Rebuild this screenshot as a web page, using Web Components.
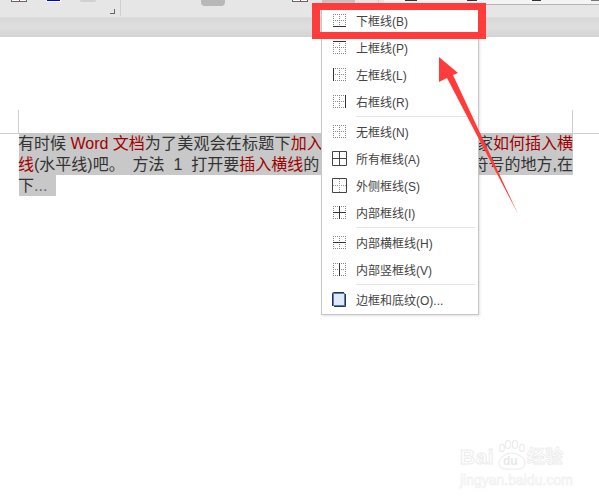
<!DOCTYPE html>
<html lang="zh">
<head>
<meta charset="utf-8">
<title>下框线</title>
<style>
  html, body { margin: 0; padding: 0; background: #fff; }
  body { width: 599px; height: 501px; overflow: hidden; font-family: "Liberation Sans", "Noto Sans CJK SC", sans-serif; }
</style>
</head>
<body>
<word-window>
  <word-ribbon slot="top"></word-ribbon>
  <doc-page slot="doc">
    <doc-line><span>有时候 <b>Word 文档</b><u>为了美观会在标题下</u><b>加入</b></span><span>家<b>如何插入横</b></span></doc-line>
    <doc-line><span><b>线</b>(水平线)吧。<em>&nbsp;&nbsp;</em>方法&nbsp;&nbsp;1&nbsp;&nbsp;打开要<b>插入横线</b>的</span><span>符号的地方,在</span></doc-line>
    <doc-line short><span>下<i>...</i></span></doc-line>
  </doc-page>
  <border-menu slot="over">
    <menu-row icon="B">下框线(B)</menu-row>
    <menu-row icon="P">上框线(P)</menu-row>
    <menu-row icon="L">左框线(L)</menu-row>
    <menu-row icon="R">右框线(R)</menu-row>
    <menu-sep></menu-sep>
    <menu-row icon="N">无框线(N)</menu-row>
    <menu-row icon="A">所有框线(A)</menu-row>
    <menu-row icon="S">外侧框线(S)</menu-row>
    <menu-row icon="I">内部框线(I)</menu-row>
    <menu-sep></menu-sep>
    <menu-row icon="H">内部横框线(H)</menu-row>
    <menu-row icon="V">内部竖框线(V)</menu-row>
    <menu-sep></menu-sep>
    <menu-row icon="O">边框和底纹(O)...</menu-row>
  </border-menu>
  <red-callout slot="over"></red-callout>
  <baidu-mark slot="over"></baidu-mark>
</word-window>

<script>
// Page frame: ribbon + grey band on top, document below, overlays on top of both
class WordWindow extends HTMLElement {
  constructor() {
    super();
    this.attachShadow({ mode: 'open' });
    this.shadowRoot.innerHTML = `
      <style>
        :host { display: flex; flex-direction: column; position: relative; width: 599px; height: 501px; overflow: hidden; }
        .band { height: 19px; background: linear-gradient(#d8d8d8 0, #dfdfdf 45%, #d3d3d3 100%); }
      </style>
      <slot name="top"></slot>
      <div class="band"></div>
      <slot name="doc"></slot>
      <slot name="over"></slot>
    `;
  }
}

// Only the cut-off bottom edge of the ribbon is visible
class WordRibbon extends HTMLElement {
  constructor() {
    super();
    this.attachShadow({ mode: 'open' });
    this.shadowRoot.innerHTML = `
      <style>
        :host { display: flex; align-items: flex-start; height: 18px; background: #e6e6e6; box-sizing: border-box; border-bottom: 1px solid #dcdcdc; }
        div { flex: none; box-sizing: border-box; }
        .box { height: 2px; width: 16px; border: 1px solid #666; border-top: 0; background: linear-gradient(90deg, #fff 47%, #d33 47%, #d33 56%, #fff 56%); }
        .blue { width: 15px; height: 2px; margin-left: 19px; background: #0000f0; border: 1px solid #fff; border-top: 0; }
        .grey { width: 16px; height: 2px; margin-left: 19px; background: #d0d0d0; border-radius: 0 0 2px 2px; }
        .launcher { width: 5px; height: 5px; margin: 9px 0 0 14px; border-right: 1px solid #666; border-bottom: 1px solid #666; }
        .sep { width: 1px; height: 16px; margin-left: 5px; background: #cfcfcf; }
        .pressed { width: 24px; height: 6px; margin-left: 80px; background: #b8b8b8; border-radius: 0 0 4px 4px; }
        .box2 { margin-left: 67px; }
        .sel { width: 33px; height: 3px; margin-left: 14px; background: #c4c4c4; }
        .sep2 { width: 1px; height: 16px; margin-left: 23px; background: #cfcfcf; }
        .gallery { flex: 1; height: 5px; margin-left: 5px; background: #f4f4f4; border-bottom: 1px solid #b4b4b4; display: flex; }
        .gallery span { height: 1px; background: #333; }
        .s1 { width: 12px; margin-left: 21px; }
        .s2 { width: 10px; margin-left: 50px; }
        .s3 { width: 9px; margin-left: 55px; }
        .s4 { width: 9px; margin-left: 50px; background: #777 !important; }
      </style>
      <div class="box" style="margin-left:11px"></div>
      <div class="blue"></div>
      <div class="grey"></div>
      <div class="launcher"></div>
      <div class="sep"></div>
      <div class="pressed"></div>
      <div class="box box2"></div>
      <div class="sel"></div>
      <div class="sep2"></div>
      <div class="gallery"><span class="s1"></span><span class="s2"></span><span class="s3"></span><span class="s4"></span></div>
    `;
  }
}

class DocPage extends HTMLElement {
  constructor() {
    super();
    this.attachShadow({ mode: 'open' });
    this.shadowRoot.innerHTML = `
      <style>
        :host { display: block; flex: 1; background: #fff; padding-top: 73px; }
        .marks { display: flex; justify-content: space-between; height: 24px; margin-bottom: -1px; }
        .marks div { box-sizing: border-box; border-bottom: 1px solid #cfcfcf; }
        .l { width: 19px; border-right: 1px solid #cfcfcf; }
        .r { width: 27px; border-left: 1px solid #cfcfcf; }
        .text { margin: 0 26px 0 19px; position: relative; }
      </style>
      <div class="marks"><div class="l"></div><div class="r"></div></div>
      <div class="text"><slot></slot></div>
    `;
  }
}

class DocLine extends HTMLElement {
  constructor() {
    super();
    this.attachShadow({ mode: 'open' });
    this.shadowRoot.innerHTML = `
      <style>
        :host { display: flex; justify-content: space-between; height: 21px; line-height: 21px; font-size: 16px; color: #333; background: #c8c8c8; white-space: pre; }
        :host([short]) { width: 37px; }
        ::slotted(span) { display: block; margin-left: -1px; }
      </style>
      <slot></slot>
    `;
  }
}

class BorderMenu extends HTMLElement {
  constructor() {
    super();
    this.attachShadow({ mode: 'open' });
    this.shadowRoot.innerHTML = `
      <style>
        :host { display: block; position: absolute; left: 321px; top: 4px; width: 158px; box-sizing: border-box; padding: 2px 0 1px; background: #fff; border: 1px solid #c6c6c6; box-shadow: 1px 1px 2px rgba(0,0,0,.12); }
      </style>
      <slot></slot>
    `;
  }
}

// Cell border icons: dotted grid, with the named sides drawn solid
const ICON_SIDES = {
  B: ['M0 12.5H13'],
  P: ['M0 .5H13'],
  L: ['M.5 0V13'],
  R: ['M12.5 0V13'],
  N: [],
  H: ['M0 6.5H13'],
  V: ['M6.5 0V13'],
  I: ['M0 6.5H13', 'M6.5 0V13'],
};

function iconSvg(name) {
  if (name === 'O') {
    return `<svg width="14" height="15" viewBox="0 0 14 15"><rect x="1.5" y="1.5" width="11" height="12" fill="#dfe9f8" stroke="#4a7fd0"/><path d="M.5 14V1.5a1 1 0 0 1 1-1H12M13.5 2V14.5H2" fill="none" stroke="#333"/></svg>`;
  }
  if (name === 'A') {
    return `<svg width="15" height="15" viewBox="0 0 15 15"><path d="M.5.5H14.5V14.5H.5ZM7.5 0V15M0 7.5H15" fill="none" stroke="#444"/></svg>`;
  }
  if (name === 'S') {
    return `<svg width="15" height="15" viewBox="0 0 15 15"><path d="M7.5 1V14M1 7.5H14" fill="none" stroke="#999" stroke-dasharray="1 1"/><path d="M.5.5H14.5V14.5H.5Z" fill="none" stroke="#444"/></svg>`;
  }
  const solid = (ICON_SIDES[name] || []).join('');
  return `<svg width="13" height="13" viewBox="0 0 13 13"><path d="M0 .5H13M0 6.5H13M0 12.5H13M.5 0V13M6.5 0V13M12.5 0V13" fill="none" stroke="#888" stroke-dasharray="1 1"/><path d="${solid}" fill="none" stroke="#333"/></svg>`;
}

class MenuRow extends HTMLElement {
  constructor() {
    super();
    this.attachShadow({ mode: 'open' });
  }

  connectedCallback() {
    this.shadowRoot.innerHTML = `
      <style>
        :host { display: flex; align-items: center; height: 27px; font-size: 12px; color: #444; }
        .ico { flex: none; display: flex; justify-content: center; width: 24px; margin: 0 5px 0 5px; }
        svg { display: block; }
      </style>
      <span class="ico">${iconSvg(this.getAttribute('icon'))}</span>
      <slot></slot>
    `;
  }
}

class MenuSep extends HTMLElement {
  constructor() {
    super();
    this.attachShadow({ mode: 'open' });
    this.shadowRoot.innerHTML = `
      <style>
        :host { display: block; height: 1px; margin: 1px 3px 1px 34px; background: #e6e6e6; }
      </style>
    `;
  }
}

// The annotation drawn on the screenshot: red frame and arrow
class RedCallout extends HTMLElement {
  constructor() {
    super();
    this.attachShadow({ mode: 'open' });
    this.shadowRoot.innerHTML = `
      <style>
        :host { display: block; position: absolute; left: 0; top: 0; width: 599px; height: 501px; pointer-events: none; }
        .frame { position: absolute; left: 312px; top: 3px; width: 174px; height: 36px; box-sizing: border-box; border: solid #ff3b3b; border-width: 7px 8px; }
        svg { position: absolute; left: 0; top: 0; }
      </style>
      <div class="frame"></div>
      <svg width="599" height="501" viewBox="0 0 599 501">
        <polygon points="439,57 458,73 453,75 518,214 447,78 439,82" fill="#ff3b3b"/>
      </svg>
    `;
  }
}

class BaiduMark extends HTMLElement {
  constructor() {
    super();
    this.attachShadow({ mode: 'open' });
    this.shadowRoot.innerHTML = `
      <style>
        :host { display: block; position: absolute; left: 460px; top: 440px; width: 110px; height: 48px; color: #fff; font-family: "Liberation Sans", "Noto Sans CJK SC", sans-serif; }
        .row { display: flex; align-items: flex-end; height: 30px; }
        .bai { width: 37px; font-size: 21px; line-height: 27px; font-weight: bold; letter-spacing: .5px; -webkit-text-stroke: 1px #ececec; }
        .paw { position: relative; width: 30px; height: 30px; flex: none; }
        svg { position: absolute; left: 0; top: 0; }
        .du { position: absolute; left: 6px; top: 15px; font-size: 12px; line-height: 13px; font-weight: bold; color: #e8e8e8; }
        .jy { font-size: 18px; line-height: 26px; font-weight: bold; -webkit-text-stroke: .8px #ececec; }
        .url { font-size: 14px; line-height: 16px; margin-top: 2px; -webkit-text-stroke: .6px #eeeeee; }
      </style>
      <div class="row">
        <span class="bai">Bai</span>
        <span class="paw">
          <svg width="30" height="30" viewBox="0 0 30 30" fill="none" stroke="#ececec" stroke-width="1.2">
            <ellipse cx="5" cy="8" rx="2.4" ry="3.6"/>
            <ellipse cx="11" cy="4.5" rx="2.6" ry="4"/>
            <ellipse cx="18" cy="4.5" rx="2.6" ry="4"/>
            <ellipse cx="25" cy="8" rx="2.4" ry="3.6"/>
            <path d="M2 23c0-5 7-10 13-10s13 5 13 10c0 3-2 6-6 6H8c-4 0-6-3-6-6Z"/>
          </svg>
          <span class="du">du</span>
        </span>
        <span class="jy">经验</span>
      </div>
      <div class="url">jingyan.baidu.com</div>
    `;
  }
}

customElements.define('word-window', WordWindow);
customElements.define('word-ribbon', WordRibbon);
customElements.define('doc-page', DocPage);
customElements.define('doc-line', DocLine);
customElements.define('border-menu', BorderMenu);
customElements.define('menu-row', MenuRow);
customElements.define('menu-sep', MenuSep);
customElements.define('red-callout', RedCallout);
customElements.define('baidu-mark', BaiduMark);
</script>
<style>
  doc-line b { font-weight: normal; color: #a00000; }
  doc-line i { font-style: normal; color: #667; }
  doc-line em { font-style: normal; letter-spacing: -.5px; }
  doc-line u { text-decoration: none; letter-spacing: .2px; }
</style>
</body>
</html>
